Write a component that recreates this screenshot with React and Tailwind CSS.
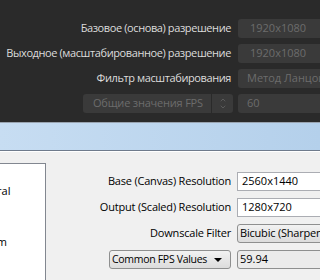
import { ChevronUp, ChevronDown } from "lucide-react";

const dark = [
  { label: "Базовое (основа) разрешение", value: "1920x1080", pad: "pl-[12px]" },
  { label: "Выходное (масштабированное) разрешение", value: "1920x1080", pad: "pl-[12px]" },
  { label: "Фильтр масштабирования", value: "Метод Ланцоша (Sharpened scaling, 36 samples)", pad: "pl-[9px]" },
];

function DarkRow({ label, value, pad }) {
  return (
    <div className="flex h-[19px] items-center">
      <div className="w-[231px] shrink-0 whitespace-nowrap text-right text-[11px] tracking-[-0.4px] text-[#dcdcdc]">
        {label}
      </div>
      <div
        className={`ml-[7px] flex h-full w-[120px] shrink-0 items-center whitespace-nowrap rounded-[3px] bg-[#3a3a3a] text-[11px] text-[#6c6c6c] ${pad}`}
      >
        {value}
      </div>
    </div>
  );
}

function LightRow({ label, children }) {
  return (
    <div className="flex h-[19px] items-center">
      <div className="w-[231px] shrink-0 whitespace-nowrap text-right text-[11px] tracking-[-0.2px] text-black">
        {label}
      </div>
      <div className="ml-[6px] h-full w-[120px] shrink-0">{children}</div>
    </div>
  );
}

function TextBox({ value }) {
  return (
    <div className="flex h-full items-center whitespace-nowrap border border-[#abadb3] bg-white pl-[4px] text-[11px] text-black">
      {value}
    </div>
  );
}

function Combo({ value, arrow, className = "" }) {
  return (
    <div
      className={`flex h-full items-center whitespace-nowrap rounded-[3px] border border-[#8e8f8f] pl-[2px] text-black ${className}`}
    >
      <span className="flex-1">{value}</span>
      {arrow && (
        <svg width="8" height="4" viewBox="0 0 8 4" className="mr-[8px] shrink-0">
          <path d="M0 0h8L4 4z" fill="#000" />
        </svg>
      )}
    </div>
  );
}

export default function App() {
  return (
    <div className="h-[280px] w-[320px] overflow-hidden font-['Open_Sans',sans-serif]">
      {/* dark panel */}
      <div className="flex h-[122px] flex-col gap-[6px] bg-[#2a2a2a] pt-[19px]">
        {dark.map((r) => (
          <DarkRow key={r.label} {...r} />
        ))}
        <div className="flex h-[19px] items-center">
          <div className="ml-[83px] flex h-full w-[150px] shrink-0 items-center rounded-[3px] bg-[#3a3a3a] text-[11px] tracking-[-0.2px] text-[#6c6c6c]">
            <span className="flex-1 whitespace-nowrap pl-[10px]">Общие значения FPS</span>
            <div className="flex h-full w-[22px] flex-col items-center justify-center border-l border-[#2a2a2a] text-[#7a7a7a]">
              <ChevronUp size={8} strokeWidth={1.5} className="-mb-[1px]" />
              <ChevronDown size={8} strokeWidth={1.5} />
            </div>
          </div>
          <div className="ml-[5px] flex h-full w-[120px] shrink-0 items-center rounded-[3px] bg-[#3a3a3a] pl-[9px] text-[11px] text-[#6c6c6c]">
            60
          </div>
        </div>
      </div>

      {/* title bar */}
      <div className="h-[1px] bg-[#9aa4b0]" />
      <div className="h-[27px] bg-gradient-to-r from-[#c7ddf2] to-[#b4d0eb]" />
      <div className="h-[1px] bg-[#6f7b8c]" />
      <div className="h-[1px] bg-white" />

      {/* body */}
      <div className="flex h-[128px] bg-[#f0f0f0]">
        <div className="mt-[11px] w-[46px] shrink-0 overflow-hidden border-r border-t border-[#828790] bg-white text-[11px] text-black">
          <div className="ml-[-30px] mt-[19px] whitespace-nowrap">General</div>
          <div className="ml-[-30px] mt-[34px] whitespace-nowrap">Stream</div>
        </div>
        <div className="ml-[-46px] flex flex-col gap-[7px] pt-[20px]">
          <LightRow label="Base (Canvas) Resolution">
            <TextBox value="2560x1440" />
          </LightRow>
          <LightRow label="Output (Scaled) Resolution">
            <TextBox value="1280x720" />
          </LightRow>
          <LightRow label="Downscale Filter">
            <Combo
              value="Bicubic (Sharpened scaling, 16 samples)"
              className="bg-gradient-to-b from-[#f2f2f2] to-[#dcdcdc] text-[11px] tracking-[-0.2px]"
            />
          </LightRow>
          <div className="flex h-[19px] items-center">
            <div className="ml-[109px] h-full w-[122px] shrink-0">
              <Combo
                value="Common FPS Values"
                arrow
                className="bg-gradient-to-b from-[#f2f2f2] to-[#dcdcdc] text-[10.5px] tracking-[-0.3px]"
              />
            </div>
            <div className="ml-[6px] h-full w-[120px] shrink-0">
              <Combo value="59.94" className="bg-[#ebebeb] text-[11px]" />
            </div>
          </div>
        </div>
      </div>
    </div>
  );
}
